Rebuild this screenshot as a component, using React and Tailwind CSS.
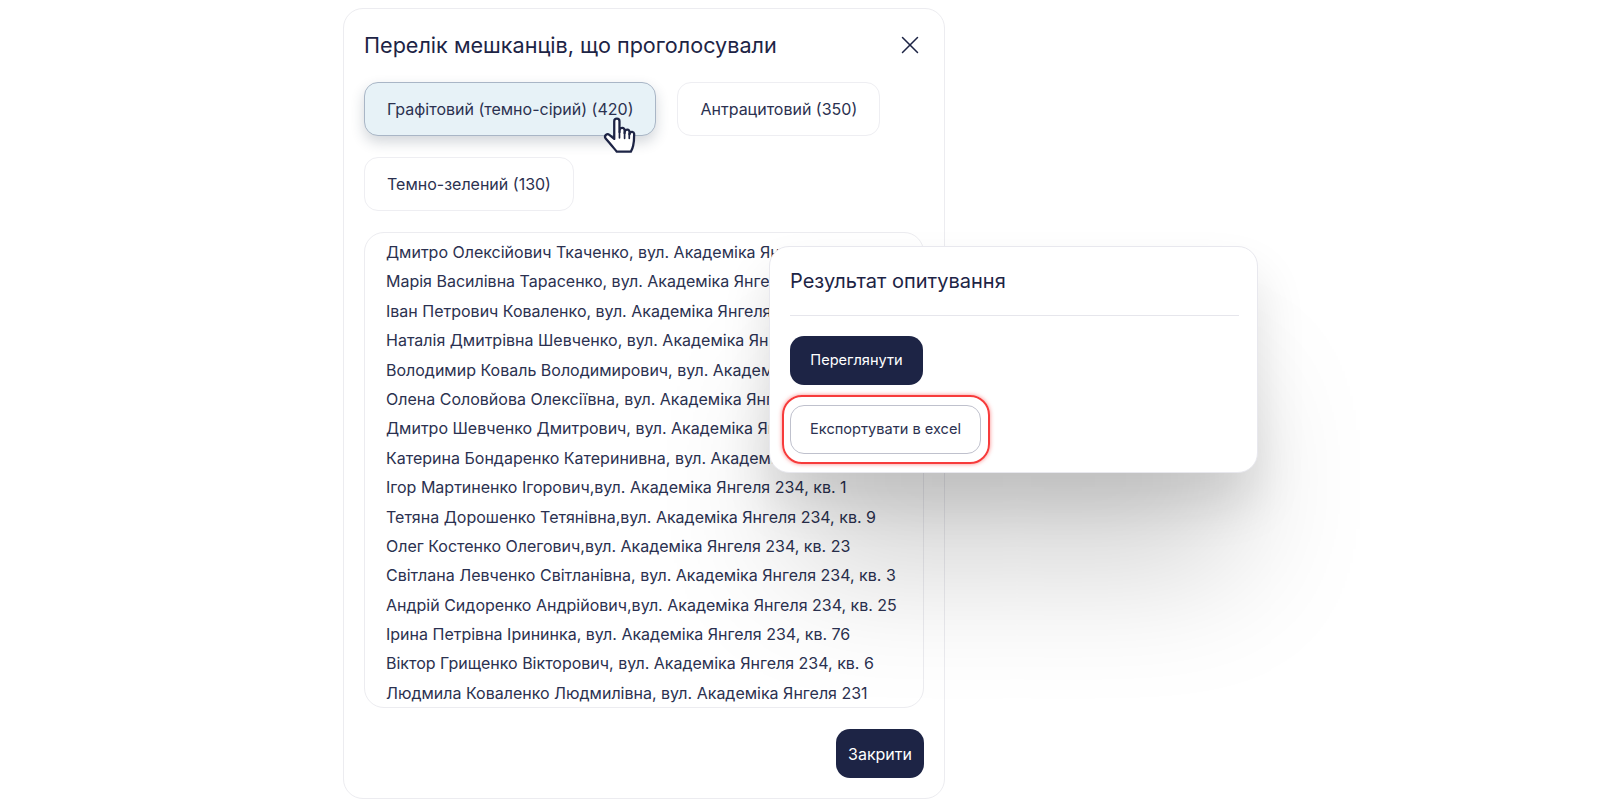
import { X } from 'lucide-react';

const residents = [
  'Дмитро Олексійович Ткаченко, вул. Академіка Янгеля 234, кв. 12',
  'Марія Василівна Тарасенко, вул. Академіка Янгеля 234, кв. 45',
  'Іван Петрович Коваленко, вул. Академіка Янгеля 234, кв. 7',
  'Наталія Дмитрівна Шевченко, вул. Академіка Янгеля 234, кв. 31',
  'Володимир Коваль Володимирович, вул. Академіка Янгеля 234',
  'Олена Соловйова Олексіївна, вул. Академіка Янгеля 234, кв. 18',
  'Дмитро Шевченко Дмитрович, вул. Академіка Янгеля 234, кв. 5',
  'Катерина Бондаренко Катеринивна, вул. Академіка Янгеля 234',
  'Ігор Мартиненко Ігорович,вул. Академіка Янгеля 234, кв. 1',
  'Тетяна Дорошенко Тетянівна,вул. Академіка Янгеля 234, кв. 9',
  'Олег Костенко Олегович,вул. Академіка Янгеля 234, кв. 23',
  'Світлана Левченко Світланівна, вул. Академіка Янгеля 234, кв. 3',
  'Андрій Сидоренко Андрійович,вул. Академіка Янгеля 234, кв. 25',
  'Ірина Петрівна Ірининка, вул. Академіка Янгеля 234, кв. 76',
  'Віктор Грищенко Вікторович, вул. Академіка Янгеля 234, кв. 6',
  'Людмила Коваленко Людмилівна, вул. Академіка Янгеля 231',
];

function Chip({ children, active }) {
  return (
    <button
      type="button"
      className={
        active
          ? 'h-[54px] rounded-[14px] border border-[#a9b6c6] bg-[#e7f2f7] px-[22px] text-[16px] text-[#2b3150] shadow-[0_6px_14px_rgba(30,50,70,0.2)]'
          : 'h-[54px] rounded-[14px] border border-[#eeeef2] bg-white px-[22px] text-[16px] text-[#2b3150]'
      }
    >
      {children}
    </button>
  );
}

function HandCursor() {
  return (
    <svg viewBox="0 0 32 36" className="absolute left-[258px] top-[106px] h-[41px] w-[37px]" fill="white" stroke="#1d2445" strokeWidth="2" strokeLinejoin="round" strokeLinecap="round">
      <path d="M10.5 21V5.5a2.3 2.3 0 0 1 4.6 0V15l0.2-2a2.2 2.2 0 0 1 4.3 0.3V16l0.2-1.6a2.1 2.1 0 0 1 4.1 0.4V17l0.3-1a2 2 0 0 1 3.8 0.6c0 4-0.2 7.4-0.9 10.4-0.5 2.3-1.2 3.6-2 5.2H12.8c-1.8-2.2-4-4.6-6.4-7.6L2.8 20.4a2.3 2.3 0 0 1 3.4-3z" />
      <path d="M15.1 15v5M19.6 15.5v5M23.7 16.5v4" fill="none" strokeWidth="1.5" />
    </svg>
  );
}

export default function App() {
  return (
    <div className="h-[807px] w-[1600px] overflow-hidden bg-white pl-[343px] pt-2 font-['Inter',sans-serif] text-[#1d2445]">
      <div className="relative flex h-[791px] w-[602px] flex-col rounded-[20px] border border-[#ececf0] bg-white pl-5 pr-[21px] pt-[21px]">
        <div className="flex items-center justify-between">
          <h2 className="text-[21.6px] leading-[30px]">Перелік мешканців, що проголосували</h2>
          <X className="-mr-[2px] h-[30px] w-[30px]" strokeWidth={1.2} aria-hidden="true" />
        </div>

        <div className="mt-[22px] flex flex-wrap gap-[21px]">
          <Chip active>Графітовий (темно-сірий) (420)</Chip>
          <Chip>Антрацитовий (350)</Chip>
          <Chip>Темно-зелений (130)</Chip>
        </div>

        <div className="mt-[21px] h-[476px] w-[560px] overflow-hidden rounded-[20px] border border-[#ececf0] pl-[21px] pr-5">
          <ul className="mt-[5px]">
            {residents.map((r) => (
              <li key={r} className="h-[29.4px] whitespace-nowrap text-[16px] leading-[29.4px] text-[#2b3150]">{r}</li>
            ))}
          </ul>
        </div>

        <div className="mt-[21px] flex justify-end">
          <button type="button" className="-mr-[1px] h-[49px] w-[88px] rounded-[14px] bg-[#1d2445] text-[16px] text-white">Закрити</button>
        </div>

        <HandCursor />

        {/* result popup */}
        <div className="absolute left-[425px] top-[237px] h-[227px] w-[489px] rounded-[20px] border border-[#e8e8ee] bg-white pl-5 pr-[18px] shadow-[0_30px_50px_rgba(0,0,0,0.12),0_120px_130px_-20px_rgba(0,0,0,0.17)]">
          <h3 className="pt-[19px] text-[20px] leading-[30px]">Результат опитування</h3>
          <div className="mt-[19px] border-t border-[#e6e6ec]" />
          <button type="button" className="mt-5 block h-[49px] w-[133px] rounded-[14px] bg-[#1d2445] text-[14.6px] text-white">Переглянути</button>
          <div className="relative mt-5">
            <button type="button" className="block h-[49px] w-[191px] rounded-[14px] border border-[#bfc1cd] bg-white text-[14.6px] text-[#2b3150]">Експортувати в excel</button>
            <div className="absolute -left-2 -top-[10px] h-[69px] w-[208px] rounded-[20px] border-2 border-[#f73b3b] shadow-[0_0_4px_rgba(247,59,59,0.6)]" />
          </div>
        </div>
      </div>
    </div>
  );
}
